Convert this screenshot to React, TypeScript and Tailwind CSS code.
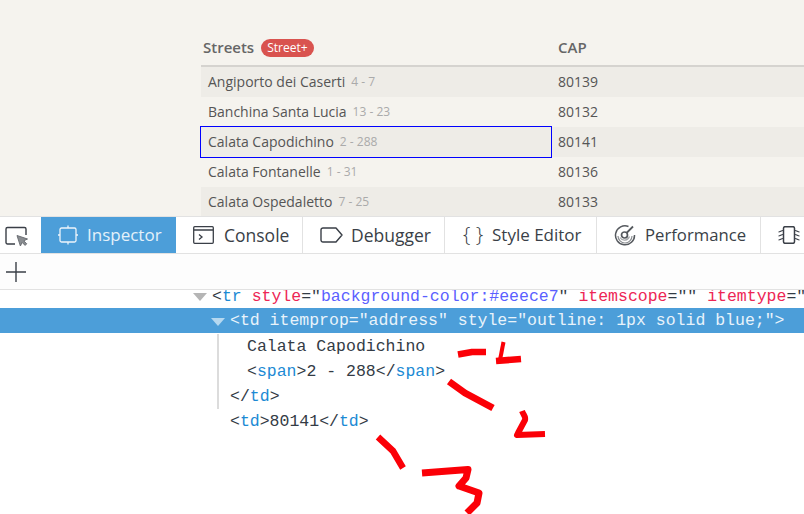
const rows = [
  { name: "Angiporto dei Caserti", range: "4 - 7", cap: "80139" },
  { name: "Banchina Santa Lucia", range: "13 - 23", cap: "80132" },
  { name: "Calata Capodichino", range: "2 - 288", cap: "80141", selected: true },
  { name: "Calata Fontanelle", range: "1 - 31", cap: "80136" },
  { name: "Calata Ospedaletto", range: "7 - 25", cap: "80133" },
];

const PickerIcon = () => (
  <svg width="24" height="22" viewBox="0 0 24 22" fill="none" stroke="#3a3f47" strokeWidth="1.4">
    <path d="M10 20H2.500A1.500 1.500 0 0 1 1 18.500V5A1.500 1.500 0 0 1 2.500 3.500h17A1.500 1.500 0 0 1 21 5v6" />
    <path d="M12 11.500l10.500 3.500-3.800 1.800 3 3-1.600 1.600-3-3-1.700 3.600z" fill="#8a8d91" stroke="#6d7075" strokeWidth="1" />
  </svg>
);

const InspectorIcon = () => (
  <svg width="20" height="20" viewBox="0 0 20 20" fill="none" stroke="#fff" strokeWidth="1.3" opacity="0.9">
    <rect x="2" y="3" width="16" height="14" rx="1.500" />
    <path d="M10 0.500v2.500M10 17v2.500M0 10h2M18 10h2" />
  </svg>
);

const ConsoleIcon = () => (
  <svg width="21" height="18" viewBox="0 0 21 18" fill="none" stroke="#3a3f47" strokeWidth="1.3">
    <rect x="0.700" y="0.700" width="19.600" height="16.600" rx="1" />
    <path d="M1 4h19M6 8.500l3 2.500-3 2.500" />
  </svg>
);

const DebuggerIcon = () => (
  <svg width="23" height="16" viewBox="0 0 23 16" fill="none" stroke="#3a3f47" strokeWidth="1.4">
    <path d="M3 1h13l6 7-6 7H3a2 2 0 0 1-2-2V3a2 2 0 0 1 2-2z" strokeLinejoin="round" />
  </svg>
);

const PerformanceIcon = () => (
  <svg width="23" height="22" viewBox="0 0 23 22" fill="none" stroke="#55595e" strokeWidth="1.500">
    <path d="M15.500 2.500a9.500 9.500 0 1 0 6 8.500" />
    <path d="M19 12a7 7 0 0 1-14 0" stroke="#8a8d91" strokeWidth="1.200" />
    <path d="M16.500 12.500a5.200 5.200 0 0 1-9.500 1" stroke="#a5a7aa" strokeWidth="1.200" />
    <circle cx="11.500" cy="11" r="3" strokeWidth="1.700" />
    <path d="M13.500 9L20 2.500" strokeWidth="1.800" />
  </svg>
);

const ResponsiveIcon = () => (
  <svg width="22" height="18" viewBox="0 0 22 18" fill="none" stroke="#3a3f47" strokeWidth="1.100">
    <rect x="5.500" y="0.700" width="11" height="16.600" rx="1.500" strokeWidth="1.500" />
    <path d="M5 4.500C3 4.500 2.500 6 .5 6M5 8.500C3 8.500 2.500 10 .5 10M5 12.500C3 12.500 2.500 14 .5 14" />
    <path d="M17 4.500c2 0 2.500 1.500 4.500 1.500M17 8.500c2 0 2.500 1.500 4.500 1.500M17 12.500c2 0 2.500 1.500 4.500 1.500" />
  </svg>
);

const tabs = [
  { label: "Console", icon: <ConsoleIcon />, box: "w-[127px] pl-[17px] gap-[10px] text-[17.5px]" },
  { label: "Debugger", icon: <DebuggerIcon />, box: "w-[142px] pl-[17px] gap-[8px] text-[17.5px]" },
  { label: "Style Editor", icon: <span className="w-[20px] whitespace-nowrap text-[21px] font-light">{"{ }"}</span>, box: "w-[152px] pl-[18px] gap-[9px] text-[17px]" },
  { label: "Performance", icon: <PerformanceIcon />, box: "w-[164px] pl-[16px] gap-[9px] text-[16.7px]" },
];

const Tag = ({ children }: { children: React.ReactNode }) => <span className="text-[#1c8ad4]">{children}</span>;

function App() {
  return (
    <div className="relative w-[804px] h-[514px] overflow-hidden bg-white font-['Liberation_Mono',monospace]">
      {/* page under inspection */}
      <div className="h-[216px] overflow-hidden bg-[#f5f3ee] pl-[201px] pt-[30px] font-['Open_Sans',sans-serif]">
        <div className="flex h-[37px] w-[700px] border-b-2 border-[#d5d3cf] text-[#666] text-[15px] font-semibold">
          <div className="flex w-[350px] items-start gap-[7px] pl-[2px] pt-[7px] leading-[20px]">
            Streets
            <span className="rounded-full bg-[#d9534f] px-[6px] mt-[2px] text-[12px] leading-[18px] font-normal text-white">Street+</span>
          </div>
          <div className="pl-[7px] pt-[7px] leading-[20px]">CAP</div>
        </div>
        {rows.map((r, i) => (
          <div key={r.cap} className={`flex h-[30px] w-[700px] items-center text-[14px] text-[#555] ${i % 2 === 0 ? "bg-[#eeece7]" : ""}`}>
            <div className={`flex h-[30px] w-[350px] items-center pb-[2px] pl-[7px] ${r.selected ? "outline outline-1 outline-[#0000ff]" : ""}`}>
              {r.name}
              <span className="ml-[6px] mt-[1px] text-[12px] text-[#aaa]">{r.range}</span>
            </div>
            <div className="flex h-[30px] items-center pb-[2px] pl-[7px]">{r.cap}</div>
          </div>
        ))}
      </div>

      {/* devtools tabs */}
      <div className="flex h-[38px] border-b border-t border-[#e2e2e2] font-['Open_Sans',sans-serif] text-[#3a3f47]">
        <div className="flex w-[41px] items-center pl-[5px]"><PickerIcon /></div>
        <div className="flex w-[135px] items-center gap-[9px] bg-[#4c9ed9] pl-[17px] text-[17px] text-[#e4f1fa]">
          <InspectorIcon />
          Inspector
        </div>
        {tabs.map((t) => (
          <div key={t.label} className={`flex ${t.box} items-center border-r border-[#e2e2e2]`}>
            {t.icon}
            {t.label}
          </div>
        ))}
        <div className="flex items-center pl-[17px]"><ResponsiveIcon /></div>
      </div>

      {/* toolbar */}
      <div className="flex h-[36px] items-center border-b border-[#e2e2e2] bg-[#fdfdfd] pl-[6px]">
        <svg width="20" height="20" viewBox="0 0 20 20" stroke="#3a3f47" strokeWidth="1.400"><path d="M10 0v20M0 10h20" /></svg>
      </div>

      {/* markup view */}
      <div className="text-[16.5px] text-[#333b45] whitespace-pre">
        <div className="relative h-[18px] overflow-hidden pl-[212px] leading-[18px]">
          <span className="absolute left-[193px] top-[3px] h-0 w-0 border-x-[7px] border-t-[8px] border-x-transparent border-t-[#b5b5b5]" />
          <span className="relative -top-[2px]">
            {"<"}<Tag>tr</Tag> <span className="text-[#ed2655]">style</span>={'"'}<span className="text-[#5b5fff]">background-color:#eeece7</span>{'" '}
            <span className="text-[#ed2655]">itemscope</span>={'"" '}<span className="text-[#ed2655]">itemtype</span>={'"'}
          </span>
        </div>
        <div className="relative h-[25px] bg-[#4c9ed9] pl-[230px] leading-[25px] text-[#e8f3fb]">
          <span className="absolute left-[211px] top-[10px] h-0 w-0 border-x-[7px] border-t-[8px] border-x-transparent border-t-[#b5d8f0]" />
          {'<td itemprop="address" style="outline: 1px solid blue;">'}
        </div>
        <div className="ml-[217px] mt-[1px] w-fit border-l-2 border-[#dcdcdc]">
          <div className="h-[25px] pl-[28px] leading-[25px]">Calata Capodichino</div>
          <div className="h-[25px] pl-[28px] leading-[25px]">{"<"}<Tag>span</Tag>{">2 - 288</"}<Tag>span</Tag>{">"}</div>
          <div className="h-[25px] pl-[11px] leading-[25px]">{"</"}<Tag>td</Tag>{">"}</div>
        </div>
        <div className="h-[25px] pl-[230px] leading-[25px]">{"<"}<Tag>td</Tag>{">80141</"}<Tag>td</Tag>{">"}</div>
      </div>

      {/* red annotations drawn over the screenshot */}
      <svg className="absolute left-0 top-0" width="804" height="514" viewBox="0 0 804 514" fill="none" stroke="#fb0007" strokeWidth="6.500" strokeLinejoin="round">
        <path d="M458 354.500L472 352L486 352" />
        <path d="M503.500 342L500 360" strokeWidth="4" />
        <path d="M496 361L521 359" />
        <path d="M449 381.500L465 393L493 408" strokeWidth="7" />
        <path d="M522 411C524 416 526 417 525 420L518 433L517 435L545 434" strokeWidth="6" />
        <path d="M378 437L393 451L403 468" />
        <path d="M422 473L468 469.500L466 478L459 486L479 493L477 503L467 513" strokeWidth="7" />
      </svg>
    </div>
  );
}

export default App;
